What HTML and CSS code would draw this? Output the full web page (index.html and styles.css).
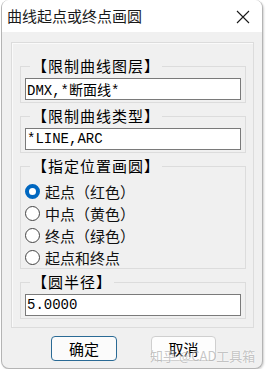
FILE: index.html
```html
<!DOCTYPE html>
<html lang="zh-CN">
<head>
  <meta charset="UTF-8" />
  <meta name="viewport" content="width=device-width, initial-scale=1.0"/>
  <title>曲线起点或终点画圆</title>
  <link rel="stylesheet" href="styles.css">
</head>
<body>
  <div class="window">
    <div class="titlebar">
      <span class="title">曲线起点或终点画圆</span>
      <svg class="close" width="14" height="14" viewBox="0 0 14 14">
        <path d="M1 1 L13 13 M13 1 L1 13" stroke="#1a1a1a" stroke-width="1.1" fill="none"/>
      </svg>
    </div>

    <div class="content">
      <div class="frame">
        <fieldset class="group">
          <legend>【限制曲线图层】</legend>
          <input class="field" type="text" value="DMX,*断面线*">
        </fieldset>

        <fieldset class="group">
          <legend>【限制曲线类型】</legend>
          <input class="field" type="text" value="*LINE,ARC">
        </fieldset>

        <fieldset class="group options">
          <legend>【指定位置画圆】</legend>
          <label class="option"><input type="radio" name="pos" checked><span>起点（红色）</span></label>
          <label class="option"><input type="radio" name="pos"><span>中点（黄色）</span></label>
          <label class="option"><input type="radio" name="pos"><span>终点（绿色）</span></label>
          <label class="option"><input type="radio" name="pos"><span>起点和终点</span></label>
        </fieldset>

        <fieldset class="group">
          <legend>【圆半径】</legend>
          <input class="field" type="text" value="5.0000">
        </fieldset>
      </div>

      <div class="buttons">
        <button class="btn btn-default">确定</button>
        <button class="btn">取消</button>
      </div>

      <div class="watermark">知乎 @CAD工具箱</div>
    </div>
  </div>
</body>
</html>
```

FILE: styles.css
```css
body {
  margin: 0;
  background: #ffffff;
  font-family: "Noto Sans CJK SC", "Noto Sans", sans-serif;
  color: #111;
}
.window {
  position: relative;
  width: 262px;
  height: 369px;
  margin-left: 1px;
  box-sizing: border-box;
  border: 1px solid #b4b4b4;
  border-top: none;
  border-radius: 8px;
  overflow: hidden;
  background: #f0f0f0;
  box-shadow: 1px 1px 2px rgba(0,0,0,0.18);
}
.titlebar {
  height: 32px;
  background: #fff;
  display: flex;
  align-items: center;
  justify-content: space-between;
  padding: 0 12px 0 5px;
}
.title {
  font-size: 15px;
  line-height: 20px;
  color: #1a1a1a;
}
.close {
  display: block;
  margin-top: 1px;
}
.content {
  padding: 10px 8px 0 9px;
}
.frame {
  border: 1px solid #dcdcdc;
  box-shadow: inset 1px 1px 0 #fafafa;
  padding: 13px 7px 8px 8px;
}
.group {
  margin: 0 0 3px;
  padding: 0 4px 2px;
  border: 1px solid #dcdcdc;
  min-width: 0;
}
.group:last-child {
  margin-bottom: 0;
}
.group legend {
  margin-left: 5px;
  padding: 0 2px;
  font-size: 15px;
  line-height: 20px;
  letter-spacing: 1px;
  color: #000;
}
.field {
  display: block;
  width: 100%;
  height: 22px;
  margin: 2px 0 0;
  box-sizing: border-box;
  border: 1px solid #7a7a7a;
  padding: 0 1px;
  background: #fff;
  font-family: "Liberation Mono", "Noto Sans CJK SC", monospace;
  font-size: 14px;
  color: #000;
  outline: none;
}
.options {
  padding-top: 4px;
  padding-bottom: 0;
}
.option {
  display: flex;
  align-items: center;
  height: 22px;
  font-size: 15px;
}
.option input {
  appearance: none;
  -webkit-appearance: none;
  width: 15px;
  height: 15px;
  margin: 0 5px 0 0;
  box-sizing: border-box;
  border: 1px solid #444;
  border-radius: 50%;
  background: #fff;
}
.option input:checked {
  border: 4px solid #0067c0;
}
.buttons {
  display: flex;
  gap: 34px;
  padding: 8px 0 0 40px;
}
.btn {
  width: 65px;
  height: 25px;
  box-sizing: border-box;
  border: 1px solid #cfcfcf;
  border-radius: 4px;
  background: #fdfdfd;
  font-family: "Noto Sans CJK SC", sans-serif;
  font-size: 15px;
  line-height: 20px;
  padding: 0;
  color: #000;
}
.btn-default {
  width: 66px;
  border-color: #2a6a95;
  background: #fbfbfb;
}
.watermark {
  position: absolute;
  left: 148px;
  top: 347px;
  font-size: 13px;
  line-height: 18px;
  color: rgba(150,150,150,0.55);
  text-shadow: 0 0 2px #fff;
  white-space: nowrap;
}
```
